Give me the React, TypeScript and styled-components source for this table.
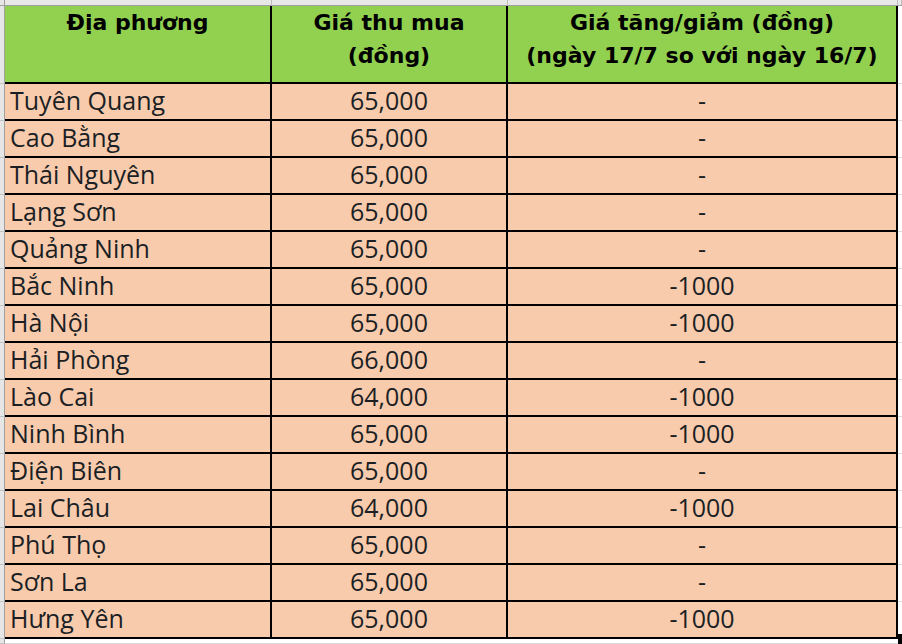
import { Fragment } from "react";
import styled, { createGlobalStyle } from "styled-components";

const GlobalStyle = createGlobalStyle`
  html, body {
    margin: 0;
    padding: 0;
    background: #ffffff;
  }
  * {
    box-sizing: border-box;
  }
`;

const Sheet = styled.div`
  position: relative;
  width: 902px;
  height: 644px;
  overflow: hidden;
  display: grid;
  grid-template-columns: 5px 267px 236px 390px 1fr;
  grid-template-rows: 6px 78px repeat(15, 37px) 1fr;
  background: #ffffff;
`;

const Corner = styled.div`
  background: #e6e6e6;
  border-right: 1px solid #9f9f9f;
  border-bottom: 1px solid #9f9f9f;
`;

const ColHead = styled.div`
  background: #e8e8e8;
  border-right: 1px solid #bdbdbd;
  border-bottom: 1px solid #9f9f9f;
`;

const RowHead = styled.div`
  background: #e6e6e6;
  border-right: 1px solid #9f9f9f;
  border-bottom: 1px solid #c4c4c4;
`;

const Fill = styled.div`
  background: #ffffff;
  border-bottom: 1px solid #dadada;
`;

const HeaderCell = styled.div`
  background: #92d050;
  border-right: 2px solid #000000;
  border-bottom: 2px solid #000000;
  font-family: "DejaVu Sans", Verdana, sans-serif;
  font-weight: bold;
  font-size: 22px;
  line-height: 33px;
  color: #000000;
  text-align: center;
  white-space: nowrap;
`;

const Cell = styled.div<{ $align: "left" | "center" }>`
  background: #f8cbad;
  border-right: 2px solid #000000;
  border-bottom: 2px solid #000000;
  font-family: "Open Sans", "Noto Sans", sans-serif;
  font-size: 25px;
  line-height: 33px;
  color: #1b1f24;
  text-align: ${({ $align }) => $align};
  padding-left: ${({ $align }) => ($align === "left" ? "5px" : "0")};
  white-space: nowrap;
`;

const FillHandle = styled.div`
  position: absolute;
  left: 898px;
  top: 634px;
  width: 4px;
  height: 10px;
  background: #000000;
`;

const rows = [
  { place: "Tuyên Quang", price: "65,000", change: "-" },
  { place: "Cao Bằng", price: "65,000", change: "-" },
  { place: "Thái Nguyên", price: "65,000", change: "-" },
  { place: "Lạng Sơn", price: "65,000", change: "-" },
  { place: "Quảng Ninh", price: "65,000", change: "-" },
  { place: "Bắc Ninh", price: "65,000", change: "-1000" },
  { place: "Hà Nội", price: "65,000", change: "-1000" },
  { place: "Hải Phòng", price: "66,000", change: "-" },
  { place: "Lào Cai", price: "64,000", change: "-1000" },
  { place: "Ninh Bình", price: "65,000", change: "-1000" },
  { place: "Điện Biên", price: "65,000", change: "-" },
  { place: "Lai Châu", price: "64,000", change: "-1000" },
  { place: "Phú Thọ", price: "65,000", change: "-" },
  { place: "Sơn La", price: "65,000", change: "-" },
  { place: "Hưng Yên", price: "65,000", change: "-1000" },
];

export default function App() {
  return (
    <>
      <GlobalStyle />
      <Sheet>
        <Corner />
        <ColHead />
        <ColHead />
        <ColHead />
        <ColHead />

        <RowHead />
        <HeaderCell>Địa phương</HeaderCell>
        <HeaderCell>
          Giá thu mua
          <br />
          (đồng)
        </HeaderCell>
        <HeaderCell>
          Giá tăng/giảm (đồng)
          <br />
          (ngày 17/7 so với ngày 16/7)
        </HeaderCell>
        <Fill />

        {rows.map((row) => (
          <Fragment key={row.place}>
            <RowHead />
            <Cell $align="left">{row.place}</Cell>
            <Cell $align="center">{row.price}</Cell>
            <Cell $align="center">{row.change}</Cell>
            <Fill />
          </Fragment>
        ))}

        <RowHead />
        <Fill />
        <Fill />
        <Fill />
        <Fill />

        <FillHandle />
      </Sheet>
    </>
  );
}
